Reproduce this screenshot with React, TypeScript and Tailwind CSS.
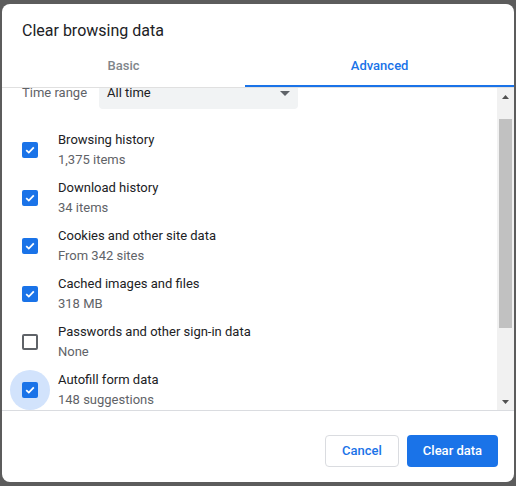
const items = [
  { label: "Browsing history", sub: "1,375 items", checked: true },
  { label: "Download history", sub: "34 items", checked: true },
  { label: "Cookies and other site data", sub: "From 342 sites", checked: true },
  { label: "Cached images and files", sub: "318 MB", checked: true },
  { label: "Passwords and other sign-in data", sub: "None", checked: false },
  { label: "Autofill form data", sub: "148 suggestions", checked: true, focused: true },
];

function Checkbox({ checked }: { checked: boolean }) {
  if (!checked) {
    return <div className="h-4 w-4 shrink-0 rounded-[2px] border-2 border-[#5f6368] bg-white" />;
  }
  return (
    <div className="flex h-4 w-4 shrink-0 items-center justify-center rounded-[2px] bg-[#1a73e8]">
      <svg width="12" height="12" viewBox="0 0 12 12" fill="none">
        <path d="M2.2 6.2 L4.8 8.6 L9.8 3.4" stroke="white" strokeWidth="1.8" />
      </svg>
    </div>
  );
}

export default function App() {
  return (
    <div
      className="h-[486px] w-[516px] bg-[#5c5c5c] pb-[4px] pl-[2px] pr-[2px] pt-[4px]"
      style={{ fontFamily: "Roboto, 'Liberation Sans', sans-serif" }}
    >
      <div className="flex h-full flex-col overflow-hidden rounded-[8px] bg-white">
        <div className="px-5 pt-[17px] text-[16px] leading-5 text-[#202124]">Clear browsing data</div>

        <div className="mt-[5px] flex border-b border-[#e0e0e0]">
          <div className="flex h-[41px] flex-auto items-center justify-center border-b-2 border-transparent text-[13px] font-medium text-[#80868b]">
            Basic
          </div>
          <div className="flex h-[41px] flex-auto items-center justify-center border-b-2 border-[#1a73e8] text-[13px] font-medium text-[#1a73e8]">
            Advanced
          </div>
        </div>

        <div className="flex min-h-0 flex-1 border-b border-[#dadce0]">
          <div className="min-w-0 flex-1 overflow-hidden">
            <div className="mt-[-15px] px-5">
              <div className="flex h-9 items-center">
                <span className="w-[77px] pt-[4px] text-[13px] text-[#5f6368]">Time range</span>
                <div className="flex h-9 w-[199px] items-center justify-between rounded-[4px] bg-[#f1f3f4] pl-2 pr-[8px] pt-[4px] text-[13px] text-[#202124]">
                  <span>All time</span>
                  <svg width="10" height="5" viewBox="0 0 10 5">
                    <path d="M0 0 H10 L5 5 Z" fill="#5f6368" />
                  </svg>
                </div>
              </div>
              <div className="mt-[17px]">
                {items.map((it) => (
                  <div key={it.label} className="relative flex h-12 items-center gap-5">
                    {it.focused && (
                      <div className="absolute left-[-12px] top-1/2 h-10 w-10 -translate-y-1/2 rounded-full bg-[#d2e3fc]" />
                    )}
                    <div className="relative">
                      <Checkbox checked={it.checked} />
                    </div>
                    <div className="text-[13px] leading-5">
                      <div className="text-[#202124]">{it.label}</div>
                      <div className="text-[#5f6368]">{it.sub}</div>
                    </div>
                  </div>
                ))}
              </div>
            </div>
          </div>

          <div className="flex w-[17px] shrink-0 flex-col items-center bg-[#f1f1f1]">
            <div className="flex h-[17px] w-full items-center justify-center">
              <svg width="7" height="4" viewBox="0 0 7 4">
                <path d="M0 4 L3.5 0 L7 4 Z" fill="#505050" />
              </svg>
            </div>
            <div className="mt-[14px] h-[209px] w-[13px] bg-[#c1c1c1]" />
            <div className="flex-1" />
            <div className="flex h-[17px] w-full items-center justify-center">
              <svg width="7" height="4" viewBox="0 0 7 4">
                <path d="M0 0 H7 L3.5 4 Z" fill="#505050" />
              </svg>
            </div>
          </div>
        </div>

        <div className="flex h-[71px] shrink-0 items-start justify-end gap-2 pr-4 pt-[24px]">
          <button className="h-8 w-[74px] rounded-[4px] border border-[#dadce0] bg-white text-[13px] font-medium text-[#1a73e8]">
            Cancel
          </button>
          <button className="h-8 w-[91px] rounded-[4px] bg-[#1a73e8] text-[13px] font-medium text-white">
            Clear data
          </button>
        </div>
      </div>
    </div>
  );
}
